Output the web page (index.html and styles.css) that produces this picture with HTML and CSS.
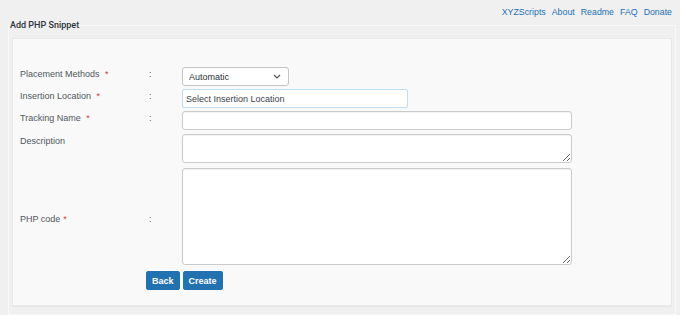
FILE: index.html
```html
<!DOCTYPE html>
<html>
<head>
  <meta charset="UTF-8">
  <title>Add PHP Snippet</title>
  <link rel="stylesheet" href="styles.css">
</head>
<body>
  <div class="top-links">
    <a href="#">XYZScripts</a>
    <a href="#">About</a>
    <a href="#">Readme</a>
    <a href="#">FAQ</a>
    <a href="#">Donate</a>
  </div>

  <fieldset class="snippet-box">
    <legend>Add PHP Snippet</legend>

    <div class="panel">
      <form class="snippet-form">
        <label class="field-label">Placement Methods <span class="req">*</span></label>
        <span class="colon">:</span>
        <div class="select-wrap">
          <select class="field-select">
            <option>Automatic</option>
          </select>
          <svg class="chevron" width="8" height="5" viewBox="0 0 8 5"><path d="M1 1l3 3 3-3" fill="none" stroke="#50575e" stroke-width="1.2"/></svg>
        </div>

        <label class="field-label">Insertion Location <span class="req">*</span></label>
        <span class="colon">:</span>
        <div><input type="text" class="field-input location" placeholder="Select Insertion Location" readonly></div>

        <label class="field-label">Tracking Name <span class="req">*</span></label>
        <span class="colon">:</span>
        <div><input type="text" class="field-input wide"></div>

        <label class="field-label desc-label">Description</label>
        <span class="colon"></span>
        <div class="desc-field"><textarea class="field-area desc"></textarea></div>

        <!-- php code row is centred on its box -->
        <label class="field-label code-label">PHP code<span class="req">*</span></label>
        <span class="colon code-label">:</span>
        <div class="code-field"><textarea class="field-area code"></textarea></div>

        <div class="button-row">
          <button type="button" class="btn">Back</button>
          <button type="button" class="btn">Create</button>
        </div>
      </form>
    </div>
  </fieldset>
</body>
</html>
```

FILE: styles.css
```css
body {
  margin: 0;
  padding: 0 4px 0 8px;
  background-color: #f0f0f1;
  font-family: "Liberation Sans", Arial, sans-serif;
  font-size: 9px;
  color: #3c434a;
}

.top-links {
  display: flex;
  justify-content: flex-end;
  gap: 6px;
  height: 19px;
  padding-right: 4px;
  padding-top: 6px;
  box-sizing: border-box;
}

.top-links a {
  color: #2271b1;
  text-decoration: none;
  font-size: 8.8px;
  line-height: 12px;
}

.snippet-box {
  margin: 0;
  padding: 7px 3px 8px 3px;
  border: 1px solid #f8f8f9;
  min-width: 0;
}

.snippet-box legend {
  padding: 0;
  margin-left: -2px;
  font-family: Roboto, "Liberation Sans", sans-serif;
  font-size: 9px;
  font-weight: 500;
  line-height: 12px;
  color: #2c3338;
}

.panel {
  background-color: #f9f9f9;
  border: 1px solid #e9e9ea;
  box-shadow: 0 1px 1px rgba(0,0,0,0.04);
  padding: 28px 7px 15px 7px;
}

.snippet-form {
  display: grid;
  grid-template-columns: 126px 36px 1fr;
  row-gap: 3px;
  margin: 0;
}

.field-label {
  line-height: 12px;
  padding-top: 1px;
  color: #50575e;
}

.req {
  color: #d63638;
  margin-left: 3px;
}

.colon {
  padding-left: 3px;
  line-height: 12px;
  padding-top: 1px;
  color: #50575e;
}

.select-wrap {
  position: relative;
  width: 107px;
}

.field-select {
  -webkit-appearance: none;
  appearance: none;
  width: 107px;
  height: 19px;
  border: 1px solid #c3c4c7;
  border-radius: 3px;
  background-color: #fff;
  font-family: inherit;
  font-size: 9px;
  color: #2c3338;
  padding: 0 0 0 6px;
  margin: 0;
}

.chevron {
  position: absolute;
  right: 8px;
  top: 7px;
}

.field-input {
  display: block;
  box-sizing: border-box;
  height: 19px;
  border: 1px solid #c9cacc;
  border-radius: 3px;
  background-color: #fff;
  box-shadow: inset 0 1px 1px rgba(0,0,0,0.05);
  font-family: inherit;
  font-size: 9px;
  padding: 0 3px;
  margin: 0;
}

.field-input.location {
  width: 226px;
  border-color: #c2dcef;
  border-radius: 2px;
  box-shadow: none;
}

.field-input.location::placeholder {
  color: #3c434a;
}

.field-input.wide {
  width: 390px;
}

.field-area {
  display: block;
  box-sizing: border-box;
  width: 390px;
  border: 1px solid #c9cacc;
  border-radius: 3px;
  background-color: #fff;
  box-shadow: inset 0 1px 1px rgba(0,0,0,0.06);
  margin: 0;
  padding: 2px 4px;
  font-family: inherit;
  font-size: 9px;
}

.desc-field {
  margin-top: 1px;
}

.desc-label {
  margin-top: 1px;
}

.field-area.desc {
  height: 29px;
}

.code-field {
  margin-top: 2px;
}

.field-area.code {
  height: 97px;
}

.code-label {
  align-self: center;
  padding-top: 6px;
}

.button-row {
  grid-column: 2 / 4;
  display: flex;
  gap: 3px;
  margin-top: 3px;
}

.btn {
  height: 19px;
  padding: 0 5px;
  border: 1px solid #2271b1;
  border-radius: 2px;
  background-color: #2271b1;
  color: #fff;
  font-family: inherit;
  font-size: 9px;
  font-weight: bold;
  cursor: pointer;
}
```
